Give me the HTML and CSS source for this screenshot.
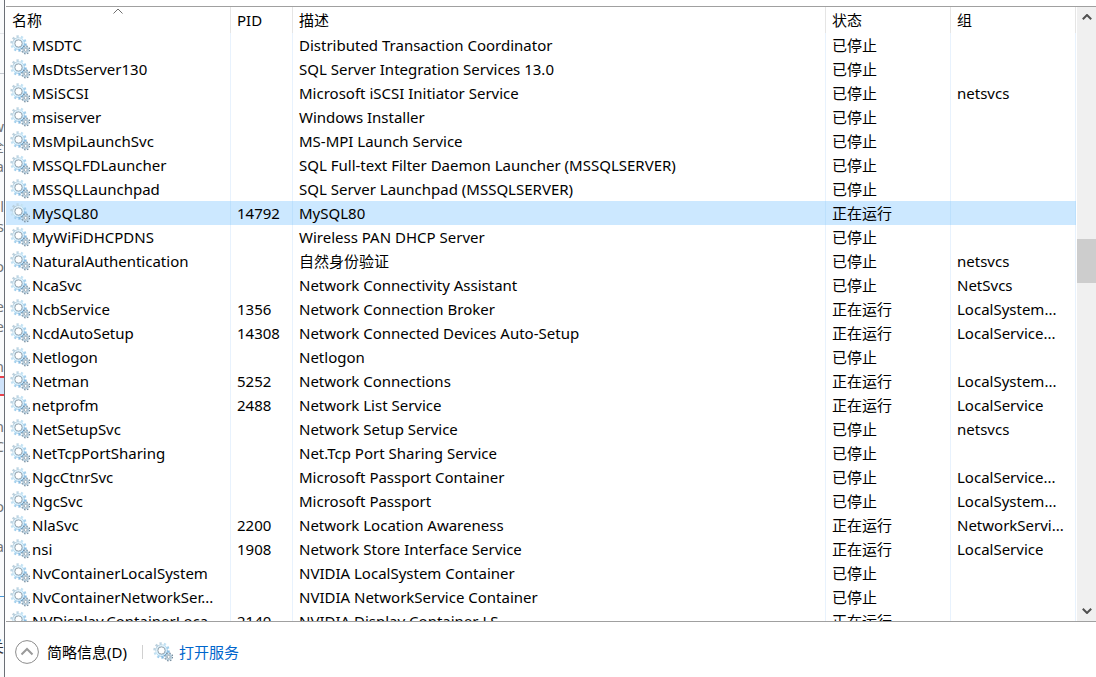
FILE: index.html
```html
<!DOCTYPE html>
<html lang="zh-CN">
<head>
<meta charset="utf-8">
<title>服务</title>
<link rel="stylesheet" href="styles.css">
</head>
<body>
<svg class="defs" aria-hidden="true">
  <defs>
    <linearGradient id="steel" x1="0" y1="0" x2="1" y2="1">
      <stop offset="0" stop-color="#b4c6d2"/>
      <stop offset="0.45" stop-color="#c6e6f8"/>
      <stop offset="1" stop-color="#5c9fd2"/>
    </linearGradient>
    <symbol id="gears" viewBox="0 0 20 20">
      <circle cx="8.5" cy="8.5" r="7" fill="none" stroke="url(#steel)" stroke-width="2.4" stroke-dasharray="2.2 2.2"/>
      <circle cx="8.5" cy="8.5" r="5.1" fill="#fff" stroke="url(#steel)" stroke-width="2.2"/>
      <circle cx="8.5" cy="8.5" r="5" fill="none" stroke="#e6f6fe" stroke-width="1"/>
      <circle cx="8.5" cy="8.5" r="3.6" fill="#fff" stroke="#8193a0" stroke-width="0.8"/>
      <circle cx="15.7" cy="14.9" r="3.8" fill="none" stroke="#71889a" stroke-width="1.4" stroke-dasharray="1.5 1.5"/>
      <circle cx="15.7" cy="14.9" r="2.6" fill="#fff" stroke="#b3cbdb" stroke-width="1.5"/>
      <circle cx="15.7" cy="14.9" r="1.5" fill="#fff" stroke="#7b909f" stroke-width="0.7"/>
    </symbol>
  </defs>
</svg>
<div class="desktop">
  <div class="behind" aria-hidden="true">
    <p>w</p><p>全</p><p>a</p><p></p><p>l</p><p>s</p><p></p><p>o</p><p></p><p>e</p><p>e</p><p></p><p>n</p><p class="marked"></p><p></p><p>n</p><p>C</p><p></p><p></p><p>o</p><p></p><p>a</p><p></p><p></p><p class="rule"></p><p></p><p class="dark">关</p>
  </div>
  <main class="window">
    <section class="list">
      <div class="rows">
        <table class="services">
          <colgroup><col class="c-name"><col class="c-pid"><col><col class="c-state"><col class="c-group"></colgroup>
          <thead>
            <tr><th class="sorted">名称<svg class="sort" viewBox="0 0 10 6"><path d="M.5 5.5 5 1l4.5 4.5"/></svg></th><th>PID</th><th>描述</th><th>状态</th><th>组</th></tr>
          </thead>
          <tbody>
            <tr><td><svg class="gear"><use href="#gears"/></svg>MSDTC</td><td></td><td>Distributed Transaction Coordinator</td><td>已停止</td><td></td></tr>
            <tr><td><svg class="gear"><use href="#gears"/></svg>MsDtsServer130</td><td></td><td>SQL Server Integration Services 13.0</td><td>已停止</td><td></td></tr>
            <tr><td><svg class="gear"><use href="#gears"/></svg>MSiSCSI</td><td></td><td>Microsoft iSCSI Initiator Service</td><td>已停止</td><td>netsvcs</td></tr>
            <tr><td><svg class="gear"><use href="#gears"/></svg>msiserver</td><td></td><td>Windows Installer</td><td>已停止</td><td></td></tr>
            <tr><td><svg class="gear"><use href="#gears"/></svg>MsMpiLaunchSvc</td><td></td><td>MS-MPI Launch Service</td><td>已停止</td><td></td></tr>
            <tr><td><svg class="gear"><use href="#gears"/></svg>MSSQLFDLauncher</td><td></td><td>SQL Full-text Filter Daemon Launcher (MSSQLSERVER)</td><td>已停止</td><td></td></tr>
            <tr><td><svg class="gear"><use href="#gears"/></svg>MSSQLLaunchpad</td><td></td><td>SQL Server Launchpad (MSSQLSERVER)</td><td>已停止</td><td></td></tr>
            <tr class="selected"><td><svg class="gear"><use href="#gears"/></svg>MySQL80</td><td>14792</td><td>MySQL80</td><td>正在运行</td><td></td></tr>
            <tr><td><svg class="gear"><use href="#gears"/></svg>MyWiFiDHCPDNS</td><td></td><td>Wireless PAN DHCP Server</td><td>已停止</td><td></td></tr>
            <tr><td><svg class="gear"><use href="#gears"/></svg>NaturalAuthentication</td><td></td><td>自然身份验证</td><td>已停止</td><td>netsvcs</td></tr>
            <tr><td><svg class="gear"><use href="#gears"/></svg>NcaSvc</td><td></td><td>Network Connectivity Assistant</td><td>已停止</td><td>NetSvcs</td></tr>
            <tr><td><svg class="gear"><use href="#gears"/></svg>NcbService</td><td>1356</td><td>Network Connection Broker</td><td>正在运行</td><td>LocalSystem...</td></tr>
            <tr><td><svg class="gear"><use href="#gears"/></svg>NcdAutoSetup</td><td>14308</td><td>Network Connected Devices Auto-Setup</td><td>正在运行</td><td>LocalService...</td></tr>
            <tr><td><svg class="gear"><use href="#gears"/></svg>Netlogon</td><td></td><td>Netlogon</td><td>已停止</td><td></td></tr>
            <tr><td><svg class="gear"><use href="#gears"/></svg>Netman</td><td>5252</td><td>Network Connections</td><td>正在运行</td><td>LocalSystem...</td></tr>
            <tr><td><svg class="gear"><use href="#gears"/></svg>netprofm</td><td>2488</td><td>Network List Service</td><td>正在运行</td><td>LocalService</td></tr>
            <tr><td><svg class="gear"><use href="#gears"/></svg>NetSetupSvc</td><td></td><td>Network Setup Service</td><td>已停止</td><td>netsvcs</td></tr>
            <tr><td><svg class="gear"><use href="#gears"/></svg>NetTcpPortSharing</td><td></td><td>Net.Tcp Port Sharing Service</td><td>已停止</td><td></td></tr>
            <tr><td><svg class="gear"><use href="#gears"/></svg>NgcCtnrSvc</td><td></td><td>Microsoft Passport Container</td><td>已停止</td><td>LocalService...</td></tr>
            <tr><td><svg class="gear"><use href="#gears"/></svg>NgcSvc</td><td></td><td>Microsoft Passport</td><td>已停止</td><td>LocalSystem...</td></tr>
            <tr><td><svg class="gear"><use href="#gears"/></svg>NlaSvc</td><td>2200</td><td>Network Location Awareness</td><td>正在运行</td><td>NetworkServi...</td></tr>
            <tr><td><svg class="gear"><use href="#gears"/></svg>nsi</td><td>1908</td><td>Network Store Interface Service</td><td>正在运行</td><td>LocalService</td></tr>
            <tr><td><svg class="gear"><use href="#gears"/></svg>NvContainerLocalSystem</td><td></td><td>NVIDIA LocalSystem Container</td><td>已停止</td><td></td></tr>
            <tr><td><svg class="gear"><use href="#gears"/></svg>NvContainerNetworkSer...</td><td></td><td>NVIDIA NetworkService Container</td><td>已停止</td><td></td></tr>
            <tr><td><svg class="gear"><use href="#gears"/></svg>NVDisplay.ContainerLoca...</td><td>2140</td><td>NVIDIA Display Container LS</td><td>正在运行</td><td></td></tr>
          </tbody>
        </table>
      </div>
      <div class="scrollbar">
        <button type="button" aria-label="向上滚动"><svg viewBox="0 0 10 6"><path d="M.8 5.2 5 1l4.2 4.2"/></svg></button>
        <div class="track"><div class="before"></div><div class="thumb"></div></div>
        <button type="button" aria-label="向下滚动"><svg viewBox="0 0 10 6"><path d="M.8.8 5 5 9.2.8"/></svg></button>
      </div>
    </section>
    <footer class="footer">
      <button type="button" class="brief"><svg viewBox="0 0 24 24"><circle cx="12" cy="12" r="11.4"/><path class="chevron" d="m6.500 14.500 5.500-5.500 5.500 5.500"/></svg>简略信息(D)</button>
      <span class="divider"></span>
      <a class="open" href="#"><svg class="gear"><use href="#gears"/></svg>打开服务</a>
    </footer>
  </main>
</div>
</body>
</html>
```
FILE: styles.css
```css
* { box-sizing: border-box; }

body {
  margin: 0;
  background: #fff;
  color: #000;
  font: 15px/24px "Noto Sans", "Noto Sans CJK SC", sans-serif;
}

.defs { position: absolute; width: 0; height: 0; }

.desktop { display: flex; height: 100vh; overflow: hidden; }

/* Page peeking out behind the left edge of the window */
.behind {
  display: flex;
  flex-direction: column;
  flex: none;
  width: 4px;
  padding-top: 116px;
  overflow: hidden;
  background: linear-gradient(#e4e6ea, #e4e6ea) 0 33px / 4px 1px no-repeat,
    linear-gradient(#c5c9d0, #c5c9d0) 0 73px / 4px 1px no-repeat, #fafbfc;
  color: #777;
}
.behind p {
  display: flex;
  justify-content: flex-end;
  flex: none;
  height: 20px;
  margin: 0;
  line-height: 20px;
}
.behind .marked { background: #cfe3fa; border: solid #e8424c; border-width: 2px 0; }
.behind .rule { border-top: 1px solid #4a9ad8; }
.behind .dark { color: #333; }

.window {
  display: flex;
  flex-direction: column;
  flex: 1;
  min-width: 0;
  padding: 6px 0 0 1px;
  border-left: 1px solid #6b6f76;
}

.list {
  display: flex;
  flex: 1;
  min-height: 0;
  border: solid #a0a0a0;
  border-width: 1px 0;
}
.rows { flex: 1; min-width: 0; overflow: hidden; }

.services { width: 100%; table-layout: fixed; border-spacing: 0; }
.c-name { width: 225px; }
.c-pid { width: 62px; }
.c-state, .c-group { width: 125px; }

th, td {
  height: 24px;
  padding: 0 6px;
  border-right: 1px solid #e8f2fd;
  font-weight: 400;
  text-align: left;
  white-space: nowrap;
  overflow: hidden;
}
th { position: relative; height: 26px; border-color: #e5e5e5; }
td:first-child { padding-left: 4px; }
.sort {
  position: absolute;
  inset: 1px 0 auto;
  width: 10px;
  height: 6px;
  margin: 0 auto;
  fill: none;
  stroke: #6e6e6e;
}
.selected td { background: #cce8ff; border-color: #bce0fd; }

.gear { width: 20px; height: 20px; margin-right: 2px; vertical-align: -4px; }

.scrollbar {
  display: flex;
  flex-direction: column;
  flex: none;
  width: 19px;
  margin-left: 1px;
  background: #f0f0f0;
}
.scrollbar button {
  display: flex;
  align-items: center;
  justify-content: center;
  height: 20px;
  padding: 0;
  border: 0;
  background: none;
}
.scrollbar svg { width: 10px; height: 6px; fill: none; stroke: #505050; stroke-width: 2; }
.track { display: flex; flex-direction: column; flex: 1; }
.before { height: 37%; }
.thumb { height: 44px; background: #cdcdcd; }

.footer { display: flex; align-items: center; padding: 12px 9px 8px; height: 55px; }
.brief {
  display: flex;
  align-items: center;
  gap: 8px;
  padding: 0;
  border: 0;
  background: none;
  color: inherit;
  font: inherit;
}
.brief svg { width: 24px; height: 24px; fill: none; stroke: #8c8c8c; }
.brief .chevron { stroke: #9a9a9a; stroke-width: 2; }
.divider { width: 1px; height: 14px; margin: 0 10px 0 15px; background: #d0d0d0; }
.open { display: flex; align-items: center; gap: 4px; color: #0066cc; text-decoration: none; }
```
